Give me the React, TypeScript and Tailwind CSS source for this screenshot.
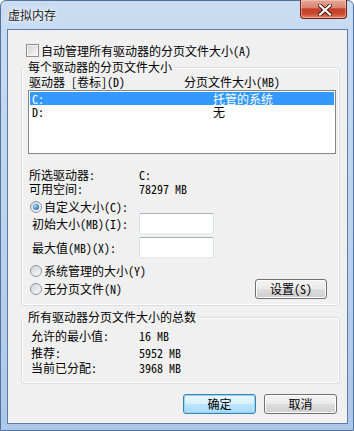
import React from "react";

const font = "font-['Noto_Sans_Mono_CJK_SC','Noto_Sans_CJK_SC',sans-serif]";

function Checkbox() {
	return (
		<span className="w-[13px] h-[13px] shrink-0 border border-[#8f8f8f] bg-gradient-to-br from-[#d2d2d2] to-[#f8f8f8] shadow-[inset_0_0_0_1px_#f4f4f4]"></span>
	);
}

function Radio({ checked }: { checked?: boolean }) {
	return (
		<span className="w-[12px] h-[12px] shrink-0 rounded-full border border-[#8c96a3] bg-gradient-to-br from-[#cfd3d7] to-[#fbfbfb] flex items-center justify-center">
			{checked && <span className="w-[6px] h-[6px] rounded-full bg-[radial-gradient(circle_at_35%_35%,#a8dbfb,#2a74bd_70%,#174f8c)]"></span>}
		</span>
	);
}

function Button({ children, primary, className = "" }: { children: React.ReactNode; primary?: boolean; className?: string }) {
	return (
		<div
			className={`h-[20px] rounded-[3px] border flex items-center justify-center ${
				primary
					? "border-[#3c7fb1] bg-[linear-gradient(to_bottom,#eaf6fd_0%,#d9f0fc_50%,#bee6fd_50%,#a7d9f5_100%)] shadow-[inset_0_0_0_1px_#8fd8fb]"
					: "border-[#707070] bg-[linear-gradient(to_bottom,#f2f2f2_0%,#ebebeb_50%,#dddddd_50%,#cfcfcf_100%)] shadow-[inset_0_0_0_1px_#fcfcfc]"
			} ${className}`}>
			{children}
		</div>
	);
}

function TextBox() {
	return <div className="w-[75px] h-[21px] bg-white border border-[#dbdfe6] border-t-[#abadb3] border-b-[#e3e9ef] rounded-[2px]"></div>;
}

function InfoRow({ label, value, className = "", labelClass = "" }: { label: string; value: string; className?: string; labelClass?: string }) {
	return (
		<div className={`h-[12px] flex items-center ${className}`}>
			<span className={`shrink-0 ${labelClass}`}>{label}</span>
			<span>{value}</span>
		</div>
	);
}

export default function App() {
	return (
		<div className={`w-[354px] h-[431px] overflow-hidden ${font} text-[12px] leading-[12px] text-black`}>
			<div className="w-[354px] h-[431px] flex flex-col rounded-t-[6px] border border-[#52739f] bg-gradient-to-b from-[#c9dcf2] via-[#bdd3ee] to-[#adc7e8]">
				{/* Title bar */}
				<div className="h-[28px] flex items-start justify-between pl-[7px] pr-[6px]">
					<span className="mt-[8px] text-[#1a1a1a] [text-shadow:0_0_6px_#ffffff,0_0_3px_#ffffff]">虚拟内存</span>
					<div className="-mt-[1px] w-[47px] h-[19px] rounded-b-[4px] border border-t-0 border-[#6b2418] bg-[linear-gradient(to_bottom,#e6a898_0%,#d98672_42%,#c43d24_50%,#c84a2f_78%,#e6856a_100%)] shadow-[inset_0_0_0_1px_rgba(255,220,210,0.45)] flex items-center justify-center">
						<svg width="14" height="12" viewBox="0 0 14 12" className="ml-[2px] mt-[1px]">
							<path d="M2 1.5 L12 10.5 M12 1.5 L2 10.5" stroke="#4a1810" strokeWidth="4" strokeLinecap="square" />
							<path d="M2 1.5 L12 10.5 M12 1.5 L2 10.5" stroke="#ffffff" strokeWidth="2.2" strokeLinecap="square" />
						</svg>
					</div>
				</div>

				{/* Client area */}
				<div className="ml-[6px] w-[341px] h-[395px] border border-[#5f7ca6] bg-[#f0f0f0] flex flex-col">
					<div className="mt-[14px] h-[13px] pl-[18px] flex items-center gap-[2px]">
						<Checkbox />
						<span>自动管理所有驱动器的分页文件大小(A)</span>
					</div>

					<fieldset className="mt-[4px] ml-[13px] w-[319px] border border-[#d5dfe5] rounded-[3px] pl-[6px] pr-[3px] pb-[6px] shadow-[inset_0_0_0_1px_#ffffff]">
						<legend className="-ml-[2px] px-[2px] leading-[12px]">每个驱动器的分页文件大小</legend>
						<div className="mt-[3px] h-[12px] flex items-center">
							<span className="w-[156px] pl-[1px] shrink-0">驱动器 [卷标](D)</span>
							<span>分页文件大小(MB)</span>
						</div>
						<div className="mt-[2px] h-[64px] border border-[#828790] bg-white p-[1px]">
							<div className="h-[13px] flex items-center pl-[2px] bg-[#3399ff] text-white">
								<span className="w-[181px] shrink-0">C:</span>
								<span>托管的系统</span>
							</div>
							<div className="h-[13px] flex items-center pl-[2px]">
								<span className="w-[181px] shrink-0">D:</span>
								<span>无</span>
							</div>
						</div>

						<InfoRow className="mt-[15px]" labelClass="w-[111px] pl-[1px]" label="所选驱动器:" value="C:" />
						<InfoRow className="mt-[2px]" labelClass="w-[111px] pl-[1px]" label="可用空间:" value="78297 MB" />

						<div className="mt-[6px] h-[12px] flex items-center gap-[2px] pl-[2px]">
							<Radio checked />
							<span>自定义大小(C):</span>
						</div>
						<div className="h-[21px] flex items-center">
							<span className="w-[111px] pl-[4px] shrink-0">初始大小(MB)(I):</span>
							<TextBox />
						</div>
						<div className="mt-[3px] h-[21px] flex items-center">
							<span className="w-[111px] pl-[4px] shrink-0">最大值(MB)(X):</span>
							<TextBox />
						</div>
						<div className="mt-[7px] h-[12px] flex items-center gap-[2px] pl-[2px]">
							<Radio />
							<span>系统管理的大小(Y)</span>
						</div>
						<div className="mt-[2px] h-[20px] flex items-center justify-between">
							<div className="flex items-center gap-[2px] pl-[2px]">
								<Radio />
								<span>无分页文件(N)</span>
							</div>
							<Button className="w-[72px] mr-[9px]">设置(S)</Button>
						</div>
					</fieldset>

					<fieldset className="mt-[5px] ml-[13px] w-[319px] border border-[#d5dfe5] rounded-[3px] pl-[6px] pr-[3px] pb-[9px] shadow-[inset_0_0_0_1px_#ffffff]">
						<legend className="-ml-[2px] px-[2px] leading-[12px]">所有驱动器分页文件大小的总数</legend>
						<InfoRow className="mt-[7px]" labelClass="w-[111px] pl-[3px]" label="允许的最小值:" value="16 MB" />
						<InfoRow className="mt-[5px]" labelClass="w-[111px] pl-[3px]" label="推荐:" value="5952 MB" />
						<InfoRow className="mt-[3px]" labelClass="w-[111px] pl-[3px]" label="当前已分配:" value="3968 MB" />
					</fieldset>

					<div className="mt-[10px] flex justify-end gap-[8px] pr-[10px]">
						<Button primary className="w-[73px]">确定</Button>
						<Button className="w-[73px]">取消</Button>
					</div>
				</div>
			</div>
		</div>
	);
}
